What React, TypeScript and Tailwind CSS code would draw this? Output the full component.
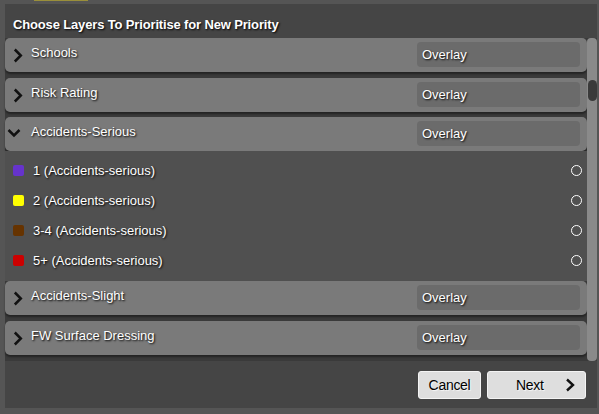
import React from "react";

const shadow = "[text-shadow:1px_1px_2px_rgba(0,0,0,1)]";

function Chevron({ down = false }: { down?: boolean }) {
  return down ? (
    <svg width="14" height="10" viewBox="0 0 14 10" className="shrink-0 mt-[4px]">
      <path d="M1.5 2 L7 7.5 L12.5 2" fill="none" stroke="#111" strokeWidth="2.5" />
    </svg>
  ) : (
    <svg width="10" height="15" viewBox="0 0 10 15" className="shrink-0 mt-[6px]">
      <path d="M1.8 1.5 L7.8 7.5 L1.8 13.5" fill="none" stroke="#111" strokeWidth="2.5" />
    </svg>
  );
}

function Row({ label, open = false }: { label: string; open?: boolean }) {
  return (
    <div className="h-[34px] rounded-[5px] bg-[#7a7a7a] flex items-start shadow-[0_2px_2px_rgba(0,0,0,0.4)]">
      <div className={`flex items-center h-[28px] ${open ? "pl-[2px] gap-[10px]" : "pl-[8px] gap-[8px]"}`}>
        <Chevron down={open} />
        <span className={`text-[13px] text-white leading-none ${shadow}`}>{label}</span>
      </div>
      <div className="ml-auto mr-[7px] mt-[4px] w-[163px] h-[25px] rounded-[4px] bg-[#6b6b6b] flex items-center pl-[5px]">
        <span className={`text-[13px] text-white leading-none ${shadow}`}>Overlay</span>
      </div>
    </div>
  );
}

const items = [
  { c: "bg-[#6633cc]", t: "1 (Accidents-serious)" },
  { c: "bg-[#ffff00]", t: "2 (Accidents-serious)" },
  { c: "bg-[#663300]", t: "3-4 (Accidents-serious)" },
  { c: "bg-[#cc0000]", t: "5+ (Accidents-serious)" },
];

export default function App() {
  return (
    <div className="w-[599px] h-[414px] bg-[#555555] overflow-hidden relative font-['Liberation_Sans',Arial,sans-serif]">
      <div className="absolute left-[34px] top-0 w-[54px] h-[1px] bg-[#9a8f3a]" />
      <div className="pt-[4px] pl-[5px] pr-[2px] pb-[6px] h-full">
        <div className="h-full bg-[#454545] flex flex-col">
          <div className="h-[34px] flex items-center pl-[8px] pt-[6px]">
            <span className={`text-[13px] font-bold text-white tracking-[-0.15px] leading-none ${shadow}`}>
              Choose Layers To Prioritise for New Priority
            </span>
          </div>
          <div className="h-[323px] flex bg-[#3a3a3a]">
            <div className="w-[582px] flex flex-col">
              <Row label="Schools" />
              <div className="h-[6px]" />
              <Row label="Risk Rating" />
              <div className="h-[5px]" />
              <Row label="Accidents-Serious" open />
              <div className="h-[130px] bg-[#505050] pt-[4px]">
                {items.map((it) => (
                  <div key={it.t} className="h-[30px] flex items-center pl-[8px] pr-[5px]">
                    <div className={`w-[11px] h-[11px] rounded-[2px] ${it.c}`} />
                    <span className={`ml-[9px] text-[13px] text-white leading-none ${shadow}`}>{it.t}</span>
                    <div className="ml-auto w-[11px] h-[11px] rounded-full border-[1.5px] border-white" />
                  </div>
                ))}
              </div>
              <Row label="Accidents-Slight" />
              <div className="h-[6px]" />
              <Row label="FW Surface Dressing" />
            </div>
            <div className="w-[10px] bg-[#8a8a8a] rounded-t-[4px] rounded-b-[4px] relative">
              <div className="absolute left-[1px] top-[42px] w-[9px] h-[21px] rounded-full bg-[#3a3a3a]" />
            </div>
          </div>
          <div className="flex justify-end gap-[6px] pt-[10px] pr-[11px]">
            <button className="w-[63px] h-[28px] rounded-[3px] bg-[#dedede] border border-[#f4f4f4] text-[14px] text-black tracking-[-0.3px] [text-shadow:1px_1px_1px_rgba(255,255,255,0.8)]">
              Cancel
            </button>
            <button className="w-[99px] h-[28px] rounded-[3px] bg-[#dedede] border border-[#f4f4f4] text-[14px] text-black tracking-[-0.3px] flex items-center pl-[28px] pr-[9px] [text-shadow:1px_1px_1px_rgba(255,255,255,0.8)]">
              <span>Next</span>
              <svg width="12" height="16" viewBox="0 0 12 16" className="ml-auto">
                <path d="M3 2.5 L9 8 L3 13.5" fill="none" stroke="#111" strokeWidth="2.4" />
              </svg>
            </button>
          </div>
        </div>
      </div>
    </div>
  );
}
